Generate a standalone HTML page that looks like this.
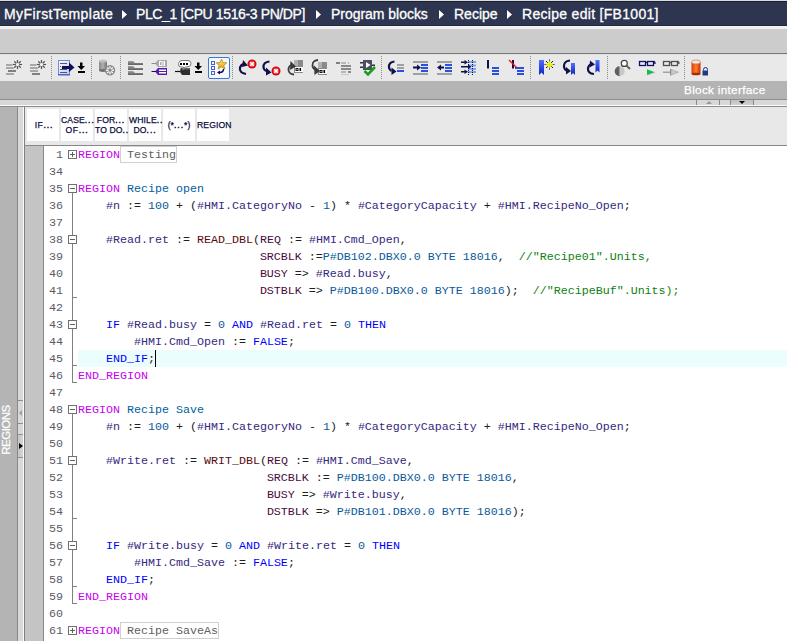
<!DOCTYPE html>
<html><head><meta charset="utf-8">
<style>
*{margin:0;padding:0;box-sizing:border-box}
html,body{width:787px;height:641px;overflow:hidden;background:#e9e9e9;font-family:"Liberation Sans",sans-serif}
.a{position:absolute}
#title{left:0;top:0;width:787px;height:29px;background:#2e3550;border-top:1px solid #dcdcdc}
#title .l1{left:0;top:0;width:787px;height:1px;background:#1b2034}
#title .l2{left:0;top:24px;width:787px;height:1px;background:#232a40}
#title .l3{left:0;top:25px;width:787px;height:3px;background:#f1f1f1}
.bc{top:6px;color:#fff;font-size:14px;white-space:nowrap;line-height:16px;-webkit-text-stroke:0.3px #fff}
.tri{width:0;height:0;border-top:3.5px solid transparent;border-bottom:3.5px solid transparent;border-left:4px solid #fff}
#band{left:0;top:29px;width:787px;height:24px;background:#cccccc}
#bandl{left:0;top:53px;width:787px;height:1px;background:#787878}
#bandl2{left:0;top:54px;width:787px;height:1px;background:#e0e0e0}
#tb{left:0;top:55px;width:787px;height:26px;background:#e9e9e9}
.sep{top:56px;width:1px;height:23px;background-image:linear-gradient(#8a8a8a 50%,transparent 50%);background-size:1px 2px}
#bi{left:0;top:81px;width:787px;height:18px;background:#b4b4b4}
#bil{left:0;top:99px;width:787px;height:1px;background:#8c8c8c}
#bis{left:0;top:100px;width:787px;height:5px;background:#d8d8d8}
#biw{left:0;top:105px;width:787px;height:1px;background:#fafafa}
#bid{left:0;top:106px;width:787px;height:1px;background:#8c8c8c}
#side{left:0;top:107px;width:17px;height:534px;background:#b4b4b4}
#sidel{left:17px;top:107px;width:1px;height:534px;background:#888}
#strip{left:18px;top:107px;width:5px;height:534px;background:#d9d9d9}
#stripw{left:23px;top:107px;width:1px;height:534px;background:#fafafa}
#stripd{left:24px;top:107px;width:1px;height:534px;background:#808080}
#rb{left:25px;top:107px;width:762px;height:38px;background:#e8e8e8}
.dt{letter-spacing:0.9px;-webkit-text-stroke:0.4px #0c0c40}
.btn{top:109px;width:32px;height:32px;background:#fff;color:#0c0c40;font-size:8.6px;line-height:10px;text-align:center;white-space:nowrap;-webkit-text-stroke:0.25px #0c0c40;letter-spacing:0.1px}
#rbl{left:25px;top:145px;width:762px;height:1px;background:#888}
#gut{left:25px;top:146px;width:18px;height:495px;background:#c4c4c4}
#gutl{left:43px;top:146px;width:1px;height:495px;background:#888}
#code{left:44px;top:146px;width:743px;height:495px;background:#fff}
.row{left:0;width:743px;height:17px;font-family:"Liberation Mono",monospace;font-size:11.667px;letter-spacing:0px;line-height:17px;white-space:pre}
.ln{left:0;width:19px;text-align:right;color:#5a5a66}
.tx{left:34px}
.kw{color:#c800f0}.bl{color:#0000ff}.vr{color:#35287e}.nm{color:#0a5a9a}.fn{color:#580a10}.pr{color:#4a0a3a}.cm{color:#108010}.op{color:#202020}.rn{color:#00609c}.gr{color:#606060}
.fold{width:9px;height:9px;border:1px solid #707070;background:#fff}
.vl{width:1px;background:#808080}
.tk{width:4px;height:1px;background:#808080}
</style></head><body>
<div id="title" class="a"></div>
<div class="a" style="left:0;top:0;width:787px;height:1px;background:#dcdcdc"></div>
<div class="a" style="left:0;top:1px;width:787px;height:1px;background:#1b2034"></div>
<div class="a" style="left:0;top:25px;width:787px;height:1px;background:#232a40"></div>
<div class="a" style="left:0;top:26px;width:787px;height:3px;background:#f1f1f1"></div>
<div class="a bc" style="left:4px;letter-spacing:0.43px">MyFirstTemplate</div>
<svg class="a" style="left:122px;top:9px" width="6" height="11"><polygon points="0,1 5,5.5 0,10" fill="#fff"/></svg>
<div class="a bc" style="left:136px;letter-spacing:-0.38px">PLC_1 [CPU 1516-3 PN/DP]</div>
<svg class="a" style="left:316px;top:9px" width="6" height="11"><polygon points="0,1 5,5.5 0,10" fill="#fff"/></svg>
<div class="a bc" style="left:331px;letter-spacing:-0.03px">Program blocks</div>
<svg class="a" style="left:439px;top:9px" width="6" height="11"><polygon points="0,1 5,5.5 0,10" fill="#fff"/></svg>
<div class="a bc" style="left:454px;letter-spacing:0px">Recipe</div>
<svg class="a" style="left:507px;top:9px" width="6" height="11"><polygon points="0,1 5,5.5 0,10" fill="#fff"/></svg>
<div class="a bc" style="left:522px;letter-spacing:0.3px">Recipe edit [FB1001]</div>

<div id="band" class="a"></div><div id="bandl" class="a"></div><div id="bandl2" class="a"></div>
<div id="tb" class="a"></div>
<!--TOOLBAR-->
<svg class="a" style="left:0;top:0" width="787" height="110" shape-rendering="geometricPrecision">
<defs>
<linearGradient id="gdoc" x1="0" y1="0" x2="1" y2="1"><stop offset="0" stop-color="#ffffff"/><stop offset="1" stop-color="#b8c8f0"/></linearGradient>
<linearGradient id="gcyl" x1="0" y1="0" x2="1" y2="0"><stop offset="0" stop-color="#8a8a8a"/><stop offset="0.5" stop-color="#b0b0b0"/><stop offset="1" stop-color="#707070"/></linearGradient>
<linearGradient id="gbm" x1="0" y1="0" x2="0" y2="1"><stop offset="0" stop-color="#5070ff"/><stop offset="1" stop-color="#1020c0"/></linearGradient>
<linearGradient id="gor" x1="0" y1="0" x2="1" y2="0"><stop offset="0" stop-color="#d04000"/><stop offset="0.5" stop-color="#ff8030"/><stop offset="1" stop-color="#c03000"/></linearGradient>
<linearGradient id="gdg" x1="0" y1="0" x2="0" y2="1"><stop offset="0" stop-color="#a0a0a0"/><stop offset="1" stop-color="#606060"/></linearGradient>
<linearGradient id="gstar" x1="0" y1="0" x2="0" y2="1"><stop offset="0" stop-color="#fff080"/><stop offset="1" stop-color="#e0a000"/></linearGradient>
</defs>
<!-- separators -->
<g stroke="#8a8a8a" stroke-width="1" stroke-dasharray="1 1">
<line x1="51.5" y1="56" x2="51.5" y2="79"/><line x1="91.5" y1="56" x2="91.5" y2="79"/><line x1="120.5" y1="56" x2="120.5" y2="79"/>
<line x1="232.5" y1="56" x2="232.5" y2="79"/><line x1="381.5" y1="56" x2="381.5" y2="79"/><line x1="530.5" y1="56" x2="530.5" y2="79"/>
<line x1="607.5" y1="56" x2="607.5" y2="79"/><line x1="684.5" y1="56" x2="684.5" y2="79"/>
</g>
<!-- icon1 -->
<g>
<rect x="6" y="64" width="8" height="2" fill="#a8a8a8"/><rect x="6" y="67" width="8" height="2" fill="#a8a8a8"/>
<rect x="8" y="70" width="8" height="2" fill="#808080"/><rect x="6" y="73" width="8" height="2" fill="#a8a8a8"/>
<circle cx="17.5" cy="64.5" r="5" fill="#f6f6f6"/><g stroke="#555" stroke-width="1.4"><line x1="17.50" y1="62.90" x2="17.50" y2="59.90"/><line x1="18.63" y1="63.37" x2="20.75" y2="61.25"/><line x1="19.10" y1="64.50" x2="22.10" y2="64.50"/><line x1="18.63" y1="65.63" x2="20.75" y2="67.75"/><line x1="17.50" y1="66.10" x2="17.50" y2="69.10"/><line x1="16.37" y1="65.63" x2="14.25" y2="67.75"/><line x1="15.90" y1="64.50" x2="12.90" y2="64.50"/><line x1="16.37" y1="63.37" x2="14.25" y2="61.25"/></g>
</g>
<g>
<rect x="30" y="64" width="8" height="2" fill="#a8a8a8"/><rect x="30" y="67" width="8" height="2" fill="#a8a8a8"/>
<rect x="30" y="70" width="8" height="2" fill="#a8a8a8"/><rect x="32" y="73" width="8" height="2" fill="#808080"/>
<circle cx="41.5" cy="64.5" r="5" fill="#f6f6f6"/><g stroke="#555" stroke-width="1.4"><line x1="41.50" y1="62.90" x2="41.50" y2="59.90"/><line x1="42.63" y1="63.37" x2="44.75" y2="61.25"/><line x1="43.10" y1="64.50" x2="46.10" y2="64.50"/><line x1="42.63" y1="65.63" x2="44.75" y2="67.75"/><line x1="41.50" y1="66.10" x2="41.50" y2="69.10"/><line x1="40.37" y1="65.63" x2="38.25" y2="67.75"/><line x1="39.90" y1="64.50" x2="36.90" y2="64.50"/><line x1="40.37" y1="63.37" x2="38.25" y2="61.25"/></g>
</g>
<!-- icon3 doc arrow -->
<g>
<rect x="58.5" y="60.5" width="11" height="14" fill="url(#gdoc)" stroke="#7a88d8"/>
<rect x="58" y="74" width="12" height="1.5" fill="#5060d0"/>
<g fill="#505868"><rect x="60" y="63" width="7" height="1"/><rect x="60" y="69" width="7" height="1"/><rect x="60" y="72" width="7" height="1"/><rect x="60" y="66" width="1" height="1"/></g>
<rect x="62" y="66" width="8" height="3" fill="#10105a"/><path d="M69 62.5 L74.5 67.5 L69 72 Z" fill="#10105a"/>
<rect x="80" y="62.5" width="2.5" height="4" fill="#000"/><path d="M77.5 66 L85 66 L81.25 70 Z" fill="#000"/><rect x="78" y="71" width="7" height="2" fill="#000"/>
</g>
<!-- icon4 cylinder -->
<g>
<rect x="99" y="61" width="8" height="9.5" fill="url(#gcyl)"/><ellipse cx="103" cy="61" rx="4" ry="1.6" fill="#c0c0c0"/><ellipse cx="103" cy="70.5" rx="4" ry="1.4" fill="#707070"/>
<circle cx="110" cy="70.2" r="5.2" fill="#8a8a8a"/>
<g stroke="#fff" stroke-width="1.3"><line x1="110" y1="66.2" x2="110" y2="68.6"/><line x1="110" y1="71.8" x2="110" y2="74.2"/><line x1="106" y1="70.2" x2="108.4" y2="70.2"/><line x1="111.6" y1="70.2" x2="114" y2="70.2"/><line x1="107.2" y1="67.4" x2="108.8" y2="69"/><line x1="112.8" y1="67.4" x2="111.2" y2="69"/><line x1="107.2" y1="73" x2="108.8" y2="71.4"/><line x1="112.8" y1="73" x2="111.2" y2="71.4"/></g>
</g>
<!-- icon5 folder lines -->
<g fill="url(#gdg)">
<path d="M128 61 H133 L135 63 H143 V65 H128 Z"/><path d="M128 66 H133 L135 68 H143 V70 H128 Z"/><path d="M128 71 H133 L135 73 H143 V75 H128 Z"/>
</g>
<!-- icon6 tags -->
<g>
<path d="M155 63.5 L158 60 H167 V67 H158 Z" fill="#a8a8a8"/><line x1="151.5" y1="63.5" x2="156" y2="63.5" stroke="#8090a0"/>
<rect x="159.5" y="61.5" width="2.5" height="4" fill="none" stroke="#fff" stroke-width="1"/><rect x="163.5" y="61" width="1.5" height="5" fill="#fff"/>
<path d="M155 71.5 L158 68 H167 V75 H158 Z" fill="#5a1aa8"/><line x1="151.5" y1="71.5" x2="156" y2="71.5" stroke="#10105a"/>
<rect x="159" y="69.5" width="7" height="1.5" fill="#fff"/><rect x="159" y="72" width="7" height="1.5" fill="#fff"/>
</g>
<!-- icon7 bubble tag + download -->
<g>
<path d="M180.5 68.5 L182 68 H190 V75 H182 L180 72 Z" fill="#2e2e2e"/><rect x="182" y="68" width="8" height="1.5" fill="#6a6a6a"/>
<line x1="175" y1="71.5" x2="180" y2="71.5" stroke="#101010" stroke-width="1.2"/>
<path d="M181 67 Q178 67 178.5 63.5 Q179 60.5 182 60.5 H188 Q191 60.5 191 63.5 Q191 66.5 188 66.8 L185 67 L183 70 L183.5 67 Z" fill="#fff" stroke="#7a7a7a" stroke-width="1"/>
<g fill="#000"><rect x="180" y="63" width="2" height="2"/><rect x="183" y="63" width="2" height="2"/><rect x="186" y="63" width="2" height="2"/></g>
<rect x="197" y="62.5" width="2.5" height="4" fill="#000"/><path d="M194.5 66 L202 66 L198.25 70 Z" fill="#000"/><rect x="195" y="71" width="7" height="2" fill="#000"/>
</g>
<!-- icon8 selected -->
<g>
<rect x="208.5" y="57.5" width="21" height="21" rx="1.5" fill="#f6f9fe" stroke="#3a78d8"/>
<g fill="none" stroke="#4a60d8"><rect x="211.5" y="61.5" width="3" height="3"/><rect x="211.5" y="66.5" width="3" height="3"/><rect x="211.5" y="71.5" width="3" height="3"/></g>
<path d="M221.5 59 L223 62.6 L226.8 62.8 L223.8 65.2 L224.9 69 L221.5 66.8 L218.1 69 L219.2 65.2 L216.2 62.8 L220 62.6 Z" fill="url(#gstar)" stroke="#b08000" stroke-width="0.7"/>
<path d="M223.5 69 Q223.5 72.5 219.5 72.5" fill="none" stroke="#10105a" stroke-width="1.5"/><path d="M217 72.5 L220 70.5 L220 74.5 Z" fill="#10105a"/>
</g>
<!-- icon9 -->
<g>
<path d="M246 74 Q239 73 240 67.5 Q241 65 243 64" fill="none" stroke="#10104a" stroke-width="2.2"/>
<path d="M243 60 L248 65.5 L242 67 Z" fill="#10104a"/>
<circle cx="252" cy="64" r="4.5" fill="#d80810"/>
<g stroke="#fff" stroke-width="1.1"><line x1="250" y1="62" x2="254" y2="66"/><line x1="254" y1="62" x2="250" y2="66"/><line x1="252" y1="61.5" x2="252" y2="66.5"/><line x1="249.5" y1="64" x2="254.5" y2="64"/></g>
</g>
<g>
<path d="M269.5 61.5 Q263 62 263.5 67.5 Q264 70 266 71" fill="none" stroke="#10104a" stroke-width="2.2"/>
<path d="M266 67.5 L271.5 72.5 L266 75.5 Z" fill="#10104a"/>
<circle cx="276" cy="71" r="4.5" fill="#d80810"/>
<g stroke="#fff" stroke-width="1.1"><line x1="274" y1="69" x2="278" y2="73"/><line x1="278" y1="69" x2="274" y2="73"/><line x1="276" y1="68.5" x2="276" y2="73.5"/><line x1="273.5" y1="71" x2="278.5" y2="71"/></g>
</g>
<!-- icon11/12 -->
<g>
<rect x="294" y="60" width="9" height="13" fill="#8a8a8a"/><rect x="294" y="60" width="4" height="6" fill="#b0b0b0"/>
<rect x="295" y="67" width="8" height="5" fill="#fff"/><rect x="295.5" y="68" width="3" height="3" fill="#101010"/><rect x="296.5" y="69" width="1" height="1" fill="#fff"/><rect x="299.5" y="68" width="1.6" height="3" fill="#000"/>
<path d="M294 74.5 Q288 74 288.5 68.5 Q289 66 291 65" fill="none" stroke="#3a3a3a" stroke-width="1.8"/>
<path d="M290.5 61 L296 66.5 L290 70 Z" fill="#3a3a3a"/>
</g>
<g>
<rect x="318" y="62" width="9" height="13" fill="#8a8a8a"/><rect x="318" y="62" width="4" height="6" fill="#b0b0b0"/>
<rect x="319" y="69" width="8" height="5" fill="#fff"/><rect x="319.5" y="70" width="3" height="3" fill="#101010"/><rect x="320.5" y="71" width="1" height="1" fill="#fff"/><rect x="323.5" y="70" width="1.6" height="3" fill="#000"/>
<path d="M318 60 Q312 60.5 312.5 66 Q313 68.5 315 69.5" fill="none" stroke="#3a3a3a" stroke-width="1.8"/>
<path d="M314 65.5 L320 71 L314.5 75 Z" fill="#3a3a3a"/>
</g>
<!-- icon13 -->
<g>
<rect x="336" y="62" width="4" height="2" fill="#808080"/><rect x="341" y="62" width="5" height="2" fill="#b8b8b8"/><rect x="348" y="62" width="1" height="2" fill="#b8b8b8"/>
<rect x="341" y="65" width="10" height="2" fill="#8a8a8a"/><rect x="341" y="68" width="10" height="2" fill="#8a8a8a"/>
<rect x="341" y="71" width="5" height="2" fill="#b8b8b8"/><rect x="348" y="71" width="3" height="2" fill="#8a8a8a"/><rect x="341" y="74" width="8" height="1" fill="#c8c8c8"/>
</g>
<!-- icon14 plug check -->
<g>
<rect x="363" y="60" width="9" height="10" fill="#4a5060"/><path d="M366 62 L370.5 65 L366 68 Z" fill="#fff"/>
<rect x="360" y="62" width="3" height="1.5" fill="#303040"/><rect x="360" y="66.5" width="3" height="1.5" fill="#303040"/><rect x="372" y="64.5" width="3" height="1.5" fill="#303040"/>
<path d="M364.5 71 L368 74.5 L375 67" fill="none" stroke="#18a018" stroke-width="2.6"/>
</g>
<!-- icon15 -->
<g>
<path d="M394.5 61.5 Q388.5 62 389 67.5 Q389.5 70 391.5 71" fill="none" stroke="#10104a" stroke-width="2.2"/>
<path d="M391.5 67.5 L396.5 71.5 L391.5 75 Z" fill="#10104a"/>
<rect x="397" y="64" width="7" height="2" fill="#a0a0a0"/><rect x="397" y="67" width="7" height="2" fill="#a0a0a0"/><rect x="397" y="70" width="7" height="2" fill="#2a50e0"/>
</g>
<!-- icon16 indent -->
<g>
<rect x="413" y="61" width="15" height="2" fill="#a0a0a0"/><rect x="413" y="73" width="15" height="2" fill="#a0a0a0"/>
<rect x="421" y="64" width="7" height="2" fill="#2a50e0"/><rect x="421" y="67" width="7" height="2" fill="#2a50e0"/><rect x="421" y="70" width="7" height="2" fill="#2a50e0"/>
<rect x="413" y="66.5" width="5" height="2" fill="#10104a"/><path d="M417 64.5 L421 67.5 L417 70.5 Z" fill="#10104a"/>
</g>
<g>
<rect x="437" y="61" width="15" height="2" fill="#a0a0a0"/><rect x="437" y="73" width="15" height="2" fill="#a0a0a0"/>
<rect x="445" y="64" width="7" height="2" fill="#2a50e0"/><rect x="445" y="67" width="7" height="2" fill="#2a50e0"/><rect x="445" y="70" width="7" height="2" fill="#2a50e0"/>
<rect x="440" y="66.5" width="4" height="2" fill="#10104a"/><path d="M441 64.5 L437 67.5 L441 70.5 Z" fill="#10104a"/>
</g>
<!-- icon18 -->
<g>
<g fill="#80a0f0"><rect x="468" y="61" width="8" height="2"/><rect x="468" y="64.5" width="8" height="2"/><rect x="468" y="68" width="8" height="2"/><rect x="468" y="71" width="8" height="2"/></g>
<g stroke="#10104a" stroke-dasharray="1 1"><line x1="468.5" y1="60" x2="468.5" y2="76"/><line x1="472.5" y1="60" x2="472.5" y2="76"/></g>
<rect x="461" y="61.5" width="4" height="1.5" fill="#10104a"/><path d="M464.5 60 L468 62.25 L464.5 64.5 Z" fill="#10104a"/>
<rect x="461" y="66" width="8" height="1.5" fill="#10104a"/><path d="M468 64.5 L471.5 66.75 L468 69 Z" fill="#10104a"/>
<rect x="461" y="71" width="4" height="1.5" fill="#10104a"/><path d="M464.5 69.5 L468 71.75 L464.5 74 Z" fill="#10104a"/>
</g>
<!-- icon19/20 -->
<g>
<rect x="487" y="60" width="2" height="8.5" fill="#10104a"/>
<rect x="492" y="67" width="7" height="2" fill="#2a50e0"/><rect x="492" y="70" width="7" height="2" fill="#2a50e0"/><rect x="492" y="73" width="7" height="2" fill="#2a50e0"/>
</g>
<g>
<rect x="512" y="60" width="2" height="8.5" fill="#10104a"/>
<rect x="515" y="67" width="9" height="2" fill="#2a50e0"/><rect x="517" y="70" width="7" height="2" fill="#2a50e0"/><rect x="517" y="73" width="7" height="2" fill="#2a50e0"/>
<line x1="509" y1="60" x2="516.5" y2="67.5" stroke="#f01010" stroke-width="1.3"/>
</g>
<!-- icon21 bookmark star -->
<g>
<path d="M539 60 H544 V75 L541.5 72.5 L539 75 Z" fill="url(#gbm)"/>
<g stroke="#10105a" stroke-width="1"><line x1="549.5" y1="59.5" x2="549.5" y2="69.5"/><line x1="544.5" y1="64.5" x2="554.5" y2="64.5"/><line x1="546" y1="61" x2="553" y2="68"/><line x1="553" y1="61" x2="546" y2="68"/></g>
<circle cx="549.5" cy="64.5" r="2.6" fill="#f8f800"/>
<g stroke="#e8e800" stroke-width="0.8"><line x1="549.5" y1="60.5" x2="549.5" y2="68.5"/><line x1="545.5" y1="64.5" x2="553.5" y2="64.5"/></g>
</g>
<g>
<path d="M570 60.5 Q563.5 61 564 67 Q564.5 69.5 566.5 70.5" fill="none" stroke="#10104a" stroke-width="2.2"/>
<path d="M566 67 L571 71 L566 74.5 Z" fill="#10104a"/>
<path d="M571 63 H575 V75 L573 73 L571 75 Z" fill="url(#gbm)"/>
</g>
<g>
<path d="M594 74 Q587.5 73.5 588 68 Q588.5 65.5 590.5 64.5" fill="none" stroke="#10104a" stroke-width="2.2"/>
<path d="M590 60.5 L595 64.5 L589.5 67.5 Z" fill="#10104a"/>
<path d="M595.5 60 H599.5 V72.5 L597.5 70.5 L595.5 72.5 Z" fill="url(#gbm)"/>
</g>
<!-- icon24 -->
<g>
<path d="M619.7 66.2 A5 5 0 0 0 619.7 76.2 Z" fill="#606060"/><path d="M619.7 66.2 A5 5 0 0 1 619.7 76.2 Z" fill="#c8c8c8"/>
<circle cx="624.3" cy="63.4" r="3" fill="#fff" stroke="#404040" stroke-width="1.2"/>
<line x1="626.5" y1="65.6" x2="630" y2="69" stroke="#606060" stroke-width="2"/>
</g>
<!-- icon25/26 glasses -->
<g>
<g fill="none" stroke="#10106a" stroke-width="1.3"><rect x="639.5" y="61.5" width="6" height="4"/><rect x="647.5" y="61.5" width="6" height="4"/><line x1="645.5" y1="62.5" x2="647.5" y2="62.5"/><path d="M653.5 61.5 Q655 61.5 655 64"/></g>
<path d="M647 69.3 L654.7 72.2 L647 75.1 Z" fill="#10c040"/><path d="M647 75.1 L654.7 72.2" stroke="#a0a0b0" stroke-width="0.6"/>
</g>
<g>
<g fill="none" stroke="#505050" stroke-width="1.3"><rect x="663.5" y="61.5" width="6" height="4"/><rect x="671.5" y="61.5" width="6" height="4"/><line x1="669.5" y1="62.5" x2="671.5" y2="62.5"/><path d="M677.5 61.5 Q679 61.5 679 64"/></g>
<path d="M671 69.3 L678.7 72.2 L671 75.1 Z" fill="#c8c8c8" stroke="#a0a0a0" stroke-width="0.6"/><line x1="663" y1="72.2" x2="671" y2="72.2" stroke="#909090" stroke-width="1.2"/><line x1="670.5" y1="69" x2="670.5" y2="75.5" stroke="#909090"/>
</g>
<!-- icon27 -->
<g>
<rect x="691.5" y="62" width="9" height="12" fill="url(#gor)"/><ellipse cx="696" cy="62" rx="4.5" ry="2" fill="#f0e8e0" stroke="#c06030" stroke-width="0.6"/><ellipse cx="696" cy="74" rx="4.5" ry="1.3" fill="#b02800"/>
<path d="M703.5 70.5 V69.5 A2 2 0 0 1 707.5 69.5 V70.5" fill="none" stroke="#203070" stroke-width="1"/>
<rect x="702.5" y="70.5" width="5.5" height="5" fill="#1a3a90"/>
</g>
</svg>
<!--/TOOLBAR-->

<div id="bi" class="a"></div><div id="bil" class="a"></div><div id="bis" class="a"></div><div id="biw" class="a"></div><div id="bid" class="a"></div>
<div class="a" style="left:684px;top:83px;color:#fff;font-size:11.75px;line-height:14px;white-space:nowrap;letter-spacing:0.3px;-webkit-text-stroke:0.25px #fff">Block interface</div>

<div id="side" class="a"></div><div id="sidel" class="a"></div><div id="strip" class="a"></div><div id="stripw" class="a"></div><div id="stripd" class="a"></div>
<div class="a" style="left:-22px;top:423px;width:55px;height:14px;transform:rotate(-90deg);color:#fff;font-size:11.5px;line-height:14px;text-align:center;letter-spacing:-0.5px;white-space:nowrap;-webkit-text-stroke:0.25px #fff">REGIONS</div>
<div class="a" style="left:18px;top:400px;width:5px;height:1px;background:#909090"></div>
<div class="a" style="left:18px;top:423px;width:5px;height:1px;background:#909090"></div>
<div class="a" style="left:18px;top:434px;width:5px;height:1px;background:#909090"></div>
<div class="a" style="left:18px;top:435px;width:5px;height:22px;background:linear-gradient(90deg,#c4c4c4,#d6d6d6)"></div>
<div class="a" style="left:18px;top:457px;width:5px;height:1px;background:#909090"></div>
<div class="a" style="left:19px;top:410px;width:0;height:0;border-top:3px solid transparent;border-bottom:3px solid transparent;border-right:3px solid #a0a0a0"></div>
<div class="a" style="left:19px;top:443px;width:0;height:0;border-top:3.5px solid transparent;border-bottom:3.5px solid transparent;border-left:4px solid #000"></div>
<div class="a" style="left:696px;top:100px;width:1px;height:5px;background:#888"></div>
<div class="a" style="left:719px;top:100px;width:1px;height:5px;background:#888"></div>
<div class="a" style="left:730px;top:100px;width:1px;height:5px;background:#888"></div>
<div class="a" style="left:731px;top:100px;width:22px;height:5px;background:linear-gradient(#c0c0c0,#d0d0d0)"></div>
<div class="a" style="left:753px;top:100px;width:1px;height:5px;background:#888"></div>
<div class="a" style="left:706px;top:101px;width:0;height:0;border-left:3px solid transparent;border-right:3px solid transparent;border-bottom:3px solid #989898"></div>
<div class="a" style="left:739px;top:101px;width:0;height:0;border-left:3.5px solid transparent;border-right:3.5px solid transparent;border-top:3.5px solid #000"></div>
<div id="rb" class="a"></div>
<div class="a btn" style="left:27px"><div style="padding-top:11px;padding-left:2px;letter-spacing:0.5px">IF<span class="dt">...</span></div></div>
<div class="a btn" style="left:61px"><div style="padding-top:6px">CASE<span class="dt">...</span><br><span style="letter-spacing:0.6px">OF</span><span class="dt">...</span></div></div>
<div class="a btn" style="left:95px"><div style="padding-top:6px">FOR<span class="dt">...</span><br>TO DO<span class="dt">...</span></div></div>
<div class="a btn" style="left:129px"><div style="padding-top:6px">WHILE<span class="dt">...</span><br>DO<span class="dt">...</span></div></div>
<div class="a btn" style="left:163px"><div style="padding-top:11px">(*<span class="dt">...</span>*)</div></div>
<div class="a btn" style="left:197px"><div style="padding-top:11px">REGION</div></div>
<div id="rbl" class="a"></div>
<div id="gut" class="a"></div><div id="gutl" class="a"></div>
<div id="code" class="a">
<!--CODE-->
<div class="a" style="left:34px;top:204px;width:709px;height:17px;background:#ebfdfd"></div>
<div class="a row" style="top:1px"><span class="a ln">1</span><span class="a tx"><span class="kw">REGION</span><span class="op"> </span><span class="gr">Testing</span></span></div>
<div class="a row" style="top:18px"><span class="a ln">34</span><span class="a tx"></span></div>
<div class="a row" style="top:35px"><span class="a ln">35</span><span class="a tx"><span class="kw">REGION</span><span class="op"> </span><span class="rn">Recipe open</span></span></div>
<div class="a row" style="top:52px"><span class="a ln">36</span><span class="a tx"><span class="op">    </span><span class="vr">#n</span><span class="op"> := </span><span class="nm">100</span><span class="op"> + (</span><span class="vr">#HMI.CategoryNo</span><span class="op"> - </span><span class="nm">1</span><span class="op">) * </span><span class="vr">#CategoryCapacity</span><span class="op"> + </span><span class="vr">#HMI.RecipeNo_Open</span><span class="op">;</span></span></div>
<div class="a row" style="top:69px"><span class="a ln">37</span><span class="a tx"></span></div>
<div class="a row" style="top:86px"><span class="a ln">38</span><span class="a tx"><span class="op">    </span><span class="vr">#Read.ret</span><span class="op"> := </span><span class="fn">READ_DBL</span><span class="op">(</span><span class="pr">REQ</span><span class="op"> := </span><span class="vr">#HMI.Cmd_Open</span><span class="op">,</span></span></div>
<div class="a row" style="top:103px"><span class="a ln">39</span><span class="a tx"><span class="op">                          </span><span class="pr">SRCBLK</span><span class="op"> :=</span><span class="nm">P#DB102.DBX0.0 BYTE 18016</span><span class="op">,  </span><span class="cm">//&quot;Recipe01&quot;.Units,</span></span></div>
<div class="a row" style="top:120px"><span class="a ln">40</span><span class="a tx"><span class="op">                          </span><span class="pr">BUSY</span><span class="op"> =&gt; </span><span class="vr">#Read.busy</span><span class="op">,</span></span></div>
<div class="a row" style="top:137px"><span class="a ln">41</span><span class="a tx"><span class="op">                          </span><span class="pr">DSTBLK</span><span class="op"> =&gt; </span><span class="nm">P#DB100.DBX0.0 BYTE 18016</span><span class="op">);  </span><span class="cm">//&quot;RecipeBuf&quot;.Units);</span></span></div>
<div class="a row" style="top:154px"><span class="a ln">42</span><span class="a tx"></span></div>
<div class="a row" style="top:171px"><span class="a ln">43</span><span class="a tx"><span class="op">    </span><span class="bl">IF</span><span class="op"> </span><span class="vr">#Read.busy</span><span class="op"> = </span><span class="nm">0</span><span class="op"> </span><span class="bl">AND</span><span class="op"> </span><span class="vr">#Read.ret</span><span class="op"> = </span><span class="nm">0</span><span class="op"> </span><span class="bl">THEN</span></span></div>
<div class="a row" style="top:188px"><span class="a ln">44</span><span class="a tx"><span class="op">        </span><span class="vr">#HMI.Cmd_Open</span><span class="op"> := </span><span class="bl">FALSE</span><span class="op">;</span></span></div>
<div class="a row" style="top:205px"><span class="a ln">45</span><span class="a tx"><span class="op">    </span><span class="bl">END_IF</span><span class="op">;</span></span></div>
<div class="a row" style="top:222px"><span class="a ln">46</span><span class="a tx"><span class="kw">END_REGION</span></span></div>
<div class="a row" style="top:239px"><span class="a ln">47</span><span class="a tx"></span></div>
<div class="a row" style="top:256px"><span class="a ln">48</span><span class="a tx"><span class="kw">REGION</span><span class="op"> </span><span class="rn">Recipe Save</span></span></div>
<div class="a row" style="top:273px"><span class="a ln">49</span><span class="a tx"><span class="op">    </span><span class="vr">#n</span><span class="op"> := </span><span class="nm">100</span><span class="op"> + (</span><span class="vr">#HMI.CategoryNo</span><span class="op"> - </span><span class="nm">1</span><span class="op">) * </span><span class="vr">#CategoryCapacity</span><span class="op"> + </span><span class="vr">#HMI.RecipeNo_Open</span><span class="op">;</span></span></div>
<div class="a row" style="top:290px"><span class="a ln">50</span><span class="a tx"></span></div>
<div class="a row" style="top:307px"><span class="a ln">51</span><span class="a tx"><span class="op">    </span><span class="vr">#Write.ret</span><span class="op"> := </span><span class="fn">WRIT_DBL</span><span class="op">(</span><span class="pr">REQ</span><span class="op"> := </span><span class="vr">#HMI.Cmd_Save</span><span class="op">,</span></span></div>
<div class="a row" style="top:324px"><span class="a ln">52</span><span class="a tx"><span class="op">                           </span><span class="pr">SRCBLK</span><span class="op"> := </span><span class="nm">P#DB100.DBX0.0 BYTE 18016</span><span class="op">,</span></span></div>
<div class="a row" style="top:341px"><span class="a ln">53</span><span class="a tx"><span class="op">                           </span><span class="pr">BUSY</span><span class="op"> =&gt; </span><span class="vr">#Write.busy</span><span class="op">,</span></span></div>
<div class="a row" style="top:358px"><span class="a ln">54</span><span class="a tx"><span class="op">                           </span><span class="pr">DSTBLK</span><span class="op"> =&gt; </span><span class="nm">P#DB101.DBX0.0 BYTE 18016</span><span class="op">);</span></span></div>
<div class="a row" style="top:375px"><span class="a ln">55</span><span class="a tx"></span></div>
<div class="a row" style="top:392px"><span class="a ln">56</span><span class="a tx"><span class="op">    </span><span class="bl">IF</span><span class="op"> </span><span class="vr">#Write.busy</span><span class="op"> = </span><span class="nm">0</span><span class="op"> </span><span class="bl">AND</span><span class="op"> </span><span class="vr">#Write.ret</span><span class="op"> = </span><span class="nm">0</span><span class="op"> </span><span class="bl">THEN</span></span></div>
<div class="a row" style="top:409px"><span class="a ln">57</span><span class="a tx"><span class="op">        </span><span class="vr">#HMI.Cmd_Save</span><span class="op"> := </span><span class="bl">FALSE</span><span class="op">;</span></span></div>
<div class="a row" style="top:426px"><span class="a ln">58</span><span class="a tx"><span class="op">    </span><span class="bl">END_IF</span><span class="op">;</span></span></div>
<div class="a row" style="top:443px"><span class="a ln">59</span><span class="a tx"><span class="kw">END_REGION</span></span></div>
<div class="a row" style="top:460px"><span class="a ln">60</span><span class="a tx"></span></div>
<div class="a row" style="top:477px"><span class="a ln">61</span><span class="a tx"><span class="kw">REGION</span><span class="op"> </span><span class="gr">Recipe SaveAs</span></span></div>
<div class="a" style="left:76px;top:0px;width:57px;height:17px;border:1px solid #d0d0d0"></div>
<div class="a" style="left:76px;top:476px;width:99px;height:17px;border:1px solid #d0d0d0"></div>
<div class="a vl" style="left:28px;top:47px;height:190px"></div><div class="a tk" style="left:29px;top:236px"></div>
<div class="a vl" style="left:28px;top:98px;height:54px"></div><div class="a tk" style="left:29px;top:151px"></div>
<div class="a vl" style="left:28px;top:183px;height:37px"></div><div class="a tk" style="left:29px;top:219px"></div>
<div class="a vl" style="left:28px;top:268px;height:190px"></div><div class="a tk" style="left:29px;top:457px"></div>
<div class="a vl" style="left:28px;top:319px;height:54px"></div><div class="a tk" style="left:29px;top:372px"></div>
<div class="a vl" style="left:28px;top:404px;height:37px"></div><div class="a tk" style="left:29px;top:440px"></div>
<div class="a fold" style="left:24px;top:4px"></div><div class="a" style="left:26px;top:8px;width:5px;height:1px;background:#606060"></div><div class="a" style="left:28px;top:6px;width:1px;height:5px;background:#606060"></div>
<div class="a fold" style="left:24px;top:38px"></div><div class="a" style="left:26px;top:42px;width:5px;height:1px;background:#606060"></div>
<div class="a fold" style="left:24px;top:89px"></div><div class="a" style="left:26px;top:93px;width:5px;height:1px;background:#606060"></div>
<div class="a fold" style="left:24px;top:174px"></div><div class="a" style="left:26px;top:178px;width:5px;height:1px;background:#606060"></div>
<div class="a fold" style="left:24px;top:259px"></div><div class="a" style="left:26px;top:263px;width:5px;height:1px;background:#606060"></div>
<div class="a fold" style="left:24px;top:310px"></div><div class="a" style="left:26px;top:314px;width:5px;height:1px;background:#606060"></div>
<div class="a fold" style="left:24px;top:395px"></div><div class="a" style="left:26px;top:399px;width:5px;height:1px;background:#606060"></div>
<div class="a fold" style="left:24px;top:480px"></div><div class="a" style="left:26px;top:484px;width:5px;height:1px;background:#606060"></div><div class="a" style="left:28px;top:482px;width:1px;height:5px;background:#606060"></div>
<div class="a" style="left:111px;top:204px;width:1px;height:17px;background:#000"></div>
<!--/CODE-->
</div>
</body></html>
